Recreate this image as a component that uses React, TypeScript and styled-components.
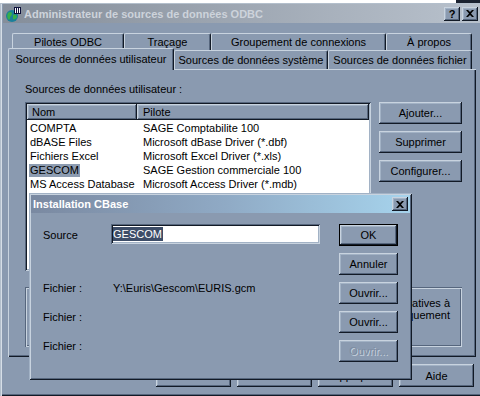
import React from "react";
import styled, { createGlobalStyle, css } from "styled-components";

const C = {
  face: "#8a9ab0",
  hi: "#c8d3df",
  light: "#a2b2c5",
  shadow: "#56667d",
  dark: "#121a26",
};

const Global = createGlobalStyle`
  html, body { margin: 0; padding: 0; background: ${C.face}; }
  body { font-family: "Liberation Sans", Arial, sans-serif; font-size: 11px; color: #000; }
  * { box-sizing: border-box; }
`;

const raised = css`
  box-shadow: inset -1px -1px 0 ${C.dark}, inset 1px 1px 0 ${C.hi},
    inset -2px -2px 0 ${C.shadow}, inset 2px 2px 0 ${C.light};
`;
const sunken = css`
  box-shadow: inset 1px 1px 0 ${C.shadow}, inset -1px -1px 0 ${C.hi},
    inset 2px 2px 0 ${C.dark}, inset -2px -2px 0 ${C.light};
`;

const Screen = styled.div`
  position: relative;
  width: 480px;
  height: 396px;
  overflow: hidden;
  background: ${C.face};
  display: flex;
  flex-direction: column;
`;

const TopStrip = styled.div`
  height: 3px;
  background: #fff;
  display: flex;
  overflow: hidden;
`;

const DateText = styled.div`
  margin-left: 72px;
  margin-top: -10px;
  height: 13px;
  line-height: 13px;
  white-space: nowrap;
`;

const DarkCorner = styled.div`
  margin-left: auto;
  width: 24px;
  background: #1a2230;
`;

const Window = styled.div`
  flex: 1;
  display: flex;
  flex-direction: column;
  padding: 1px 0 3px 3px;
  box-shadow: inset 1px 1px 0 #b3bfcc, inset 2px 0 0 #d6dee7,
    inset 0 -1px 0 ${C.dark}, inset 0 -2px 0 ${C.shadow};
`;

const TitleBar = styled.div`
  height: 19px;
  display: flex;
  align-items: center;
  padding: 0 2px;
  background: linear-gradient(90deg, #858e9a, #b8c1cc);
`;

const AppIcon = styled.svg`
  width: 16px;
  height: 16px;
  margin-right: 3px;
  flex: none;
`;

const TitleText = styled.div<{ $color: string }>`
  font-weight: bold;
  color: ${(p) => p.$color};
  white-space: nowrap;
`;

const CaptionButtons = styled.div`
  margin-left: auto;
  display: flex;
`;

const CapBtn = styled.div<{ $gap?: number }>`
  width: 16px;
  height: 14px;
  ${raised};
  background: ${C.face};
  margin-right: ${(p) => p.$gap ?? 0}px;
  display: flex;
  align-items: center;
  justify-content: center;
  font-weight: bold;
  font-size: 11px;
  line-height: 14px;
  color: #000;
`;

const Body = styled.div`
  flex: 1;
  display: flex;
  flex-direction: column;
  padding: 10px 5px 6px 5px;
`;

const TabRow = styled.div<{ $h: number; $indent: number }>`
  display: flex;
  height: ${(p) => p.$h}px;
  padding-left: ${(p) => p.$indent}px;
  align-items: flex-start;
`;

const Tab = styled.div<{ $w: number; $h: number; $active?: boolean }>`
  width: ${(p) => p.$w}px;
  height: ${(p) => (p.$active ? p.$h + 3 : p.$h)}px;
  margin-top: ${(p) => (p.$active ? -2 : 0)}px;
  position: relative;
  z-index: ${(p) => (p.$active ? 2 : 1)};
  background: ${C.face};
  border-top: 1px solid ${C.hi};
  border-left: 1px solid ${C.hi};
  border-right: 1px solid ${C.dark};
  border-radius: 2px 2px 0 0;
  box-shadow: inset -1px 0 0 ${C.shadow};
  display: flex;
  align-items: ${(p) => (p.$active ? "flex-start" : "center")};
  padding-top: ${(p) => (p.$active ? 4 : 0)}px;
  justify-content: center;
  white-space: nowrap;
`;

const Panel = styled.div`
  width: 468px;
  height: 288px;
  flex: none;
  box-shadow: inset 1px 1px 0 ${C.hi}, inset -1px -1px 0 ${C.dark},
    inset -2px -2px 0 ${C.shadow};
  padding: 14px 0 0 17px;
  display: flex;
  flex-direction: column;
`;

const SectionLabel = styled.div`
  height: 13px;
  line-height: 13px;
  margin-bottom: 6px;
`;

const ListArea = styled.div`
  display: flex;
  gap: 8px;
  align-items: flex-start;
`;

const ListView = styled.div`
  width: 346px;
  height: 169px;
  background: #fff;
  ${sunken};
  padding: 2px;
  display: flex;
  flex-direction: column;
  overflow: hidden;
`;

const HeaderRow = styled.div`
  display: flex;
  height: 16px;
  flex: none;
`;

const HeaderCell = styled.div<{ $w: number; $pad: number }>`
  width: ${(p) => p.$w}px;
  flex: ${(p) => (p.$w ? "none" : "1")};
  background: ${C.face};
  ${raised};
  padding-left: ${(p) => p.$pad}px;
  line-height: 16px;
`;

const Rows = styled.div`
  padding-top: 1px;
`;

const Row = styled.div`
  display: flex;
  height: 14px;
  line-height: 14px;
  white-space: nowrap;
`;

const Cell = styled.div<{ $w: number; $pad: number }>`
  width: ${(p) => p.$w}px;
  padding-left: ${(p) => p.$pad}px;
  display: flex;
  align-items: center;
`;

const CellText = styled.span<{ $selected?: boolean }>`
  padding: 0 1px;
  line-height: 13px;
  background: ${(p) => (p.$selected ? "#8d9cb1" : "transparent")};
`;

const SideButtons = styled.div`
  display: flex;
  flex-direction: column;
  gap: 7px;
  width: 83px;
`;

const Button = styled.div<{ $w?: number; $h?: number; $disabled?: boolean }>`
  width: ${(p) => (p.$w ? `${p.$w}px` : "100%")};
  height: ${(p) => p.$h ?? 22}px;
  background: ${C.face};
  ${raised};
  display: flex;
  align-items: center;
  justify-content: center;
  white-space: nowrap;
  color: ${(p) => (p.$disabled ? "#7d8ca1" : "#000")};
  text-shadow: ${(p) => (p.$disabled ? `1px 1px 0 ${C.hi}` : "none")};
`;

const DefaultButton = styled(Button)`
  border: 1px solid #000;
`;

const GroupBox = styled.div`
  margin-top: 16px;
  width: 437px;
  height: 60px;
  box-shadow: inset 1px 1px 0 ${C.shadow}, inset 2px 2px 0 ${C.hi},
    inset -1px -1px 0 ${C.hi}, inset -2px -2px 0 ${C.shadow};
  padding: 10px 12px 0 0;
  display: flex;
  flex-direction: column;
  align-items: flex-end;
  line-height: 12px;
  white-space: nowrap;
  overflow: hidden;
`;

const BottomBar = styled.div`
  display: flex;
  justify-content: flex-end;
  gap: 6px;
  margin-top: 7px;
  margin-right: 1px;
`;

const Dialog = styled.div`
  position: absolute;
  left: 29px;
  top: 193px;
  width: 383px;
  height: 187px;
  background: ${C.face};
  box-shadow: inset 1px 1px 0 ${C.light}, inset -1px -1px 0 ${C.dark},
    inset 2px 2px 0 ${C.hi}, inset -2px -2px 0 ${C.shadow};
  padding: 2px;
  display: flex;
  flex-direction: column;
  z-index: 5;
`;

const DialogTitle = styled.div`
  height: 18px;
  display: flex;
  align-items: center;
  padding: 0 2px;
  background: linear-gradient(90deg, #7a89a1 0%, #8fa9c4 50%, #a6d3ec 100%);
`;

const DialogGrid = styled.div`
  display: grid;
  grid-template-columns: 68px 1fr 59px;
  grid-auto-rows: 22px;
  row-gap: 7px;
  padding: 11px 12px 0 12px;
`;

const FieldLabel = styled.div<{ $top?: boolean }>`
  grid-column: 1;
  align-self: ${(p) => (p.$top ? "start" : "center")};
  line-height: 13px;
  white-space: nowrap;
`;

const FieldValue = styled.div`
  grid-column: 2;
  align-self: start;
  line-height: 13px;
  padding-left: 2px;
  white-space: nowrap;
`;

const TextInput = styled.div`
  grid-column: 2;
  width: 209px;
  height: 20px;
  align-self: start;
  background: #fff;
  ${sunken};
  padding: 3px 0 0 2px;
  display: flex;
  align-items: flex-start;
`;

const SelectedText = styled.span`
  background: #3d4d68;
  color: #fff;
  line-height: 14px;
  padding-right: 1px;
`;

const ButtonCell = styled.div`
  grid-column: 3;
  display: flex;
`;

const CloseGlyph = () => (
  <svg width="8" height="7" viewBox="0 0 8 7">
    <path d="M0 0 L2 0 L4 2 L6 0 L8 0 L5 3.5 L8 7 L6 7 L4 5 L2 7 L0 7 L3 3.5 Z" fill="#000" />
  </svg>
);

const rows: [string, string, boolean?][] = [
  ["COMPTA", "SAGE Comptabilite 100"],
  ["dBASE Files", "Microsoft dBase Driver (*.dbf)"],
  ["Fichiers Excel", "Microsoft Excel Driver (*.xls)"],
  ["GESCOM", "SAGE Gestion commerciale 100", true],
  ["MS Access Database", "Microsoft Access Driver (*.mdb)"],
];

export default function App() {
  return (
    <>
      <Global />
      <Screen>
        <TopStrip>
          <DateText>10/01/2011 10:05</DateText>
          <DarkCorner />
        </TopStrip>
        <Window>
          <TitleBar>
            <AppIcon viewBox="0 0 16 16">
              <circle cx="7" cy="10" r="6" fill="#1b7f9a" />
              <path d="M3 7 C5 5 7 6 7 8 C7 10 5 10 5 12 C5 14 4 14 3 13 C2 11 2 9 3 7 Z" fill="#36b04a" />
              <path d="M8 9 C10 8 12 9 12 11 C11 13 9 14 8 13 Z" fill="#36b04a" />
              <rect x="9" y="1" width="7" height="7" fill="#0c0f3a" />
              <rect x="10" y="2" width="1" height="5" fill="#fff" />
              <rect x="12" y="2" width="1" height="5" fill="#fff" />
              <rect x="14" y="2" width="1" height="5" fill="#fff" />
            </AppIcon>
            <TitleText $color="#cdd3db">Administrateur de sources de données ODBC</TitleText>
            <CaptionButtons>
              <CapBtn $gap={2}>?</CapBtn>
              <CapBtn>
                <CloseGlyph />
              </CapBtn>
            </CaptionButtons>
          </TitleBar>
          <Body>
            <TabRow $h={17} $indent={4}>
              <Tab $w={112} $h={17}>Pilotes ODBC</Tab>
              <Tab $w={87} $h={17}>Traçage</Tab>
              <Tab $w={175} $h={17}>Groupement de connexions</Tab>
              <Tab $w={86} $h={17}>À propos</Tab>
            </TabRow>
            <TabRow $h={19} $indent={0}>
              <Tab $w={166} $h={19} $active>
                Sources de données utilisateur
              </Tab>
              <Tab $w={154} $h={19}>Sources de données système</Tab>
              <Tab $w={144} $h={19}>Sources de données fichier</Tab>
            </TabRow>
            <Panel>
              <SectionLabel>Sources de données utilisateur :</SectionLabel>
              <ListArea>
                <ListView>
                  <HeaderRow>
                    <HeaderCell $w={110} $pad={5}>Nom</HeaderCell>
                    <HeaderCell $w={0} $pad={6}>Pilote</HeaderCell>
                  </HeaderRow>
                  <Rows>
                    {rows.map(([name, driver, sel]) => (
                      <Row key={name}>
                        <Cell $w={110} $pad={2}>
                          <CellText $selected={sel}>{name}</CellText>
                        </Cell>
                        <Cell $w={230} $pad={5}>
                          <CellText>{driver}</CellText>
                        </Cell>
                      </Row>
                    ))}
                  </Rows>
                </ListView>
                <SideButtons>
                  <Button>Ajouter...</Button>
                  <Button>Supprimer</Button>
                  <Button>Configurer...</Button>
                </SideButtons>
              </ListArea>
              <GroupBox>
                <div>Une source de données utilisateur ODBC stocke des informations relatives à</div>
                <div>la façon de se connecter au fournisseur indiqué, visible par vous uniquement</div>
              </GroupBox>
            </Panel>
            <BottomBar>
              <Button $w={75} $h={23}>OK</Button>
              <Button $w={75} $h={23}>Annuler</Button>
              <Button $w={75} $h={23}>Appliquer</Button>
              <Button $w={75} $h={23}>Aide</Button>
            </BottomBar>
          </Body>
        </Window>

        <Dialog>
          <DialogTitle>
            <TitleText $color="#ffffff">Installation CBase</TitleText>
            <CaptionButtons>
              <CapBtn>
                <CloseGlyph />
              </CapBtn>
            </CaptionButtons>
          </DialogTitle>
          <DialogGrid>
            <FieldLabel>Source</FieldLabel>
            <TextInput>
              <SelectedText>GESCOM</SelectedText>
            </TextInput>
            <ButtonCell>
              <DefaultButton>OK</DefaultButton>
            </ButtonCell>

            <ButtonCell>
              <Button>Annuler</Button>
            </ButtonCell>

            <FieldLabel $top>Fichier :</FieldLabel>
            <FieldValue>Y:\Euris\Gescom\EURIS.gcm</FieldValue>
            <ButtonCell>
              <Button>Ouvrir...</Button>
            </ButtonCell>

            <FieldLabel $top>Fichier :</FieldLabel>
            <ButtonCell>
              <Button>Ouvrir...</Button>
            </ButtonCell>

            <FieldLabel $top>Fichier :</FieldLabel>
            <ButtonCell>
              <Button $disabled>Ouvrir...</Button>
            </ButtonCell>
          </DialogGrid>
        </Dialog>
      </Screen>
    </>
  );
}
